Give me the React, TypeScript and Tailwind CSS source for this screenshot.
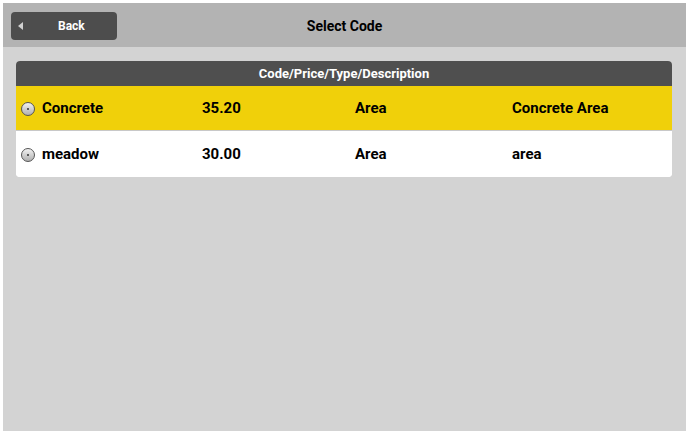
export default function App() {
  const rows = [
    { code: "Concrete", price: "35.20", type: "Area", desc: "Concrete Area", selected: true },
    { code: "meadow", price: "30.00", type: "Area", desc: "area", selected: false },
  ];

  return (
    <div
      className="w-[688px] h-[433px] bg-white pt-[3px] pl-[3px] pr-[2px] pb-[2px]"
      style={{ fontFamily: "Roboto, 'Liberation Sans', sans-serif" }}
    >
      <div className="w-full h-full bg-[#d3d3d3] flex flex-col">
        {/* Header */}
        <div className="h-[44px] bg-[#b3b3b3] flex items-center relative">
          <button className="ml-[8px] mt-[1px] w-[106px] h-[28px] bg-[#4d4d4d] rounded-[4px] flex items-center text-white text-[12px] font-bold">
            <span className="ml-[7px] w-0 h-0 border-y-[4px] border-y-transparent border-r-[5px] border-r-[#d0d0d0]" />
            <span className="ml-[35px]">Back</span>
          </button>
          <div className="absolute left-0 right-0 top-0 h-full flex items-center justify-center pointer-events-none text-[14px] font-bold text-black pt-[2px]">
            Select Code
          </div>
        </div>

        {/* Table */}
        <div className="mt-[14px] ml-[13px] w-[656px] rounded-[4px] overflow-hidden bg-white">
          <div className="h-[25px] bg-[#4f4f4f] flex items-center justify-center text-white text-[13px] font-bold pt-[1px]">
            Code/Price/Type/Description
          </div>
          {rows.map((r, i) => (
            <div
              key={r.code}
              className={
                "grid grid-cols-[186px_153px_157px_1fr] items-center text-[15px] font-bold text-black pt-[1px] " +
                (r.selected ? "bg-[#f0d00a] h-[45px]" : "bg-white h-[46px]") +
                (i === 0 ? " border-b border-[#c8c8c8]" : "")
              }
            >
              <div className="flex items-center pl-[5px]">
                <span className="w-[14px] h-[14px] rounded-full border border-[#555] bg-gradient-to-b from-[#f2f2f2] to-[#b0b0b0] flex items-center justify-center">
                  <span className="w-[2px] h-[2px] rounded-full bg-[#333]" />
                </span>
                <span className="ml-[7px]">{r.code}</span>
              </div>
              <div>{r.price}</div>
              <div>{r.type}</div>
              <div>{r.desc}</div>
            </div>
          ))}
        </div>
      </div>
    </div>
  );
}
